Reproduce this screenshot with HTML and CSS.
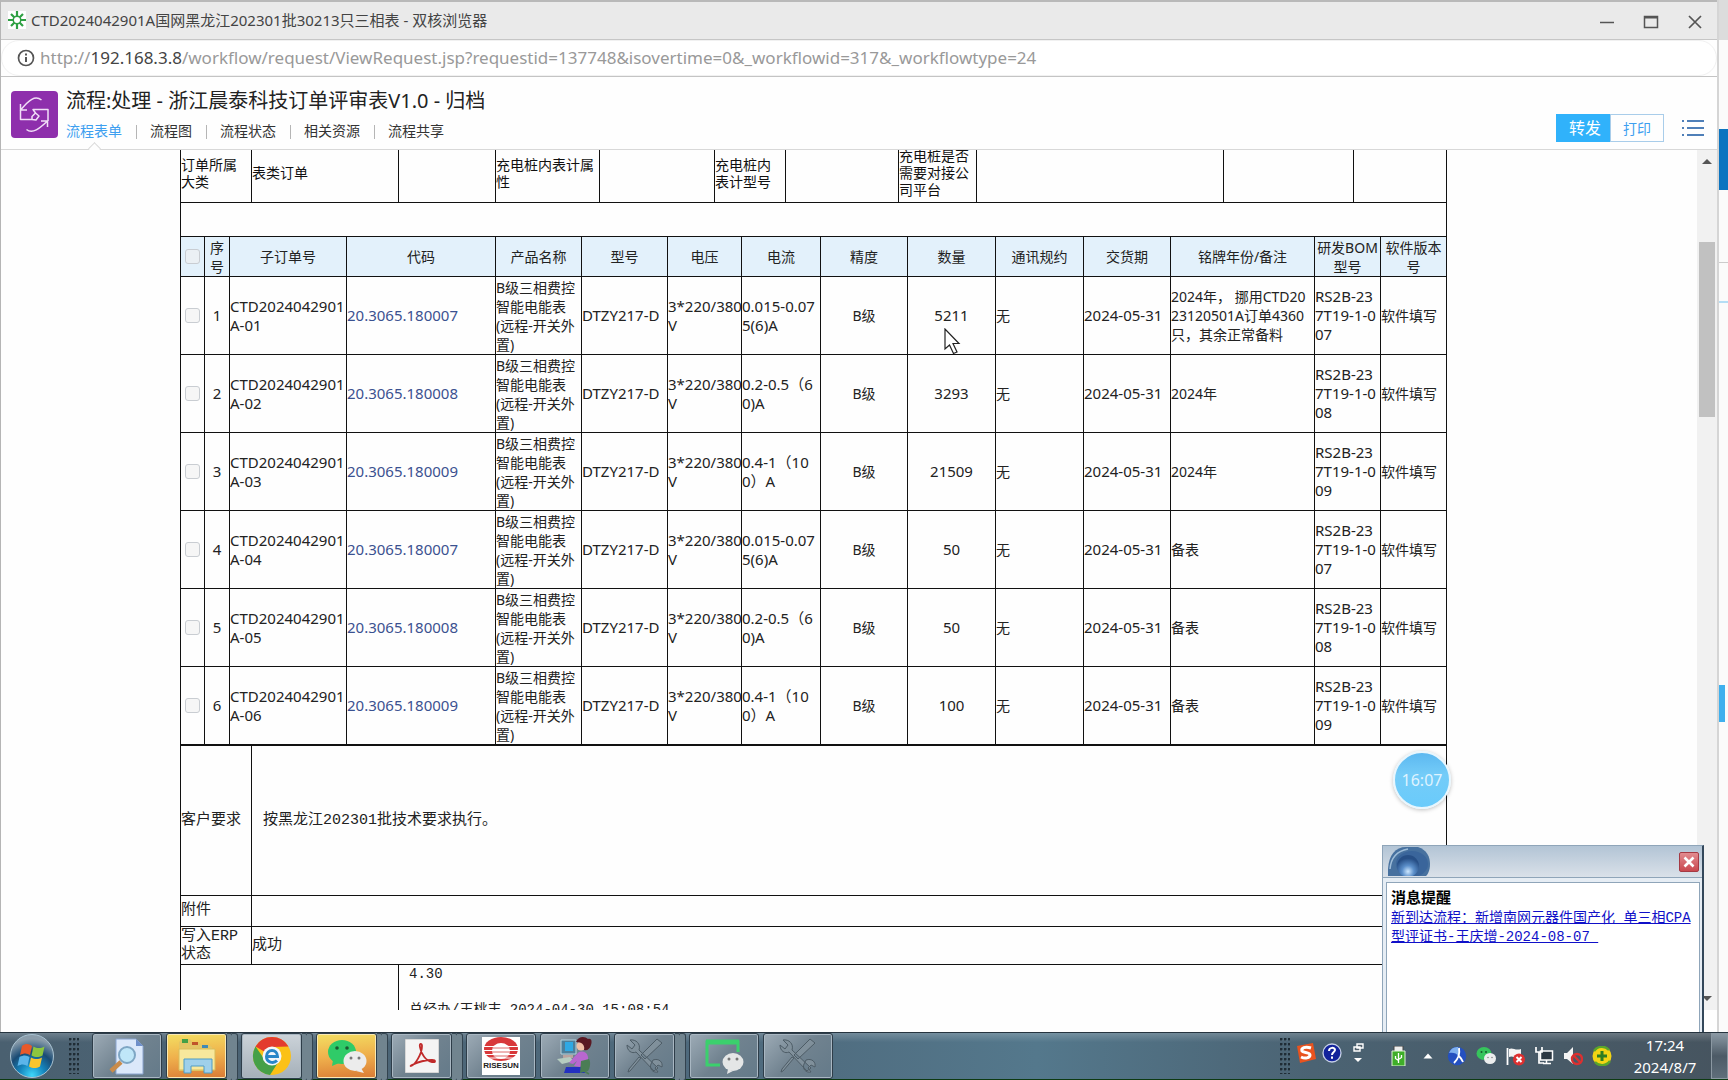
FILE: index.html
```html
<!DOCTYPE html>
<html lang="zh-CN">
<head>
<meta charset="utf-8">
<title>CTD2024042901A国网黑龙江202301批30213只三相表</title>
<link rel="stylesheet" href="styles.css">
</head>
<body>
<div class="stage">
  <section class="browser">
    <header class="titlebar">
      <svg class="favicon" width="18" height="18" viewBox="0 0 18 18"><rect width="18" height="18" fill="#fff"/><g stroke="#2ea043" stroke-width="2.200"><path d="M9 0v18M0 9h18M3 3l12 12M15 3L3 15"/></g><circle cx="9" cy="9" r="4.500" fill="#2ea043"/><circle cx="9" cy="9" r="3" fill="#fff"/></svg>
      <h1 class="window-title">CTD2024042901A国网黑龙江202301批30213只三相表 - 双核浏览器</h1>
      <div class="window-controls">
        <button type="button" aria-label="最小化"><svg width="16" height="16" viewBox="0 0 16 16"><path d="M1 8.500h14" stroke="#555" stroke-width="1.500"/></svg></button>
        <button type="button" aria-label="最大化"><svg width="16" height="16" viewBox="0 0 16 16"><path d="M1.500 2.500h13v11h-13z" fill="none" stroke="#555" stroke-width="1.500"/><path d="M1 3.500h14" stroke="#555" stroke-width="2"/></svg></button>
        <button type="button" aria-label="关闭"><svg width="16" height="16" viewBox="0 0 16 16"><path d="M2 2l12 12M14 2L2 14" stroke="#555" stroke-width="1.700"/></svg></button>
      </div>
    </header>
    <div class="addressbar">
      <div class="address-pill">
        <svg width="18" height="18" viewBox="0 0 18 18"><circle cx="9" cy="9" r="7.500" fill="none" stroke="#555" stroke-width="1.700"/><path d="M9 8v5M9 4.600v2" stroke="#555" stroke-width="2"/></svg>
        <span class="url">http://<span class="host">192.168.3.8</span>/workflow/request/ViewRequest.jsp?requestid=137748&amp;isovertime=0&amp;_workflowid=317&amp;_workflowtype=24</span>
      </div>
    </div>
    <div class="flow-head">
      <svg class="flow-icon" width="47" height="47" viewBox="0 0 47 47"><rect width="47" height="47" rx="4" fill="#8e2fac"/><g fill="none" stroke="#f1dff7" stroke-width="1.500" stroke-linejoin="round"><path d="M30.500 9C24 4 18 9 10 18.500M9.500 13v6h6.500"/><path d="M9.500 19v9.500H21v-3l3.500-3.500-2.500-3.500h15V30M21 28.500l4 .500 3-4-3.500-3"/><path d="M15.500 38.500c6 5 13-1 21-8.500M30 30h6.500v6"/></g></svg>
      <div class="flow-info">
        <h2>流程:处理 - 浙江晨泰科技订单评审表V1.0 - 归档</h2>
        <nav class="tabs">
          <a class="active" href="#form">流程表单</a><a href="#chart">流程图</a><a href="#state">流程状态</a><a href="#related">相关资源</a><a href="#share">流程共享</a>
        </nav>
      </div>
      <div class="flow-actions">
        <button type="button" class="forward">转发</button><button type="button" class="print">打印</button>
        <button type="button" class="menu" aria-label="菜单"><svg width="22" height="18" viewBox="0 0 22 18"><g stroke="#4f7fb8" stroke-width="2"><path d="M5 2h17M5 9h17M5 16h17M0 2h2M0 9h2M0 16h2"/></g></svg></button>
      </div>
    </div>
    <div class="viewport">
      <main class="sheet" id="form">
        <table class="form-table top-form">
          <colgroup><col class="w71"><col class="w147"><col class="w97"><col class="w104"><col class="w115"><col class="w71"><col class="w113"><col class="w78"><col class="w247"><col class="w130"><col class="w93"></colgroup>
          <tr><td>订单所属<br>大类</td><td>表类订单</td><td></td><td>充电桩内表计属<br>性</td><td></td><td>充电桩内<br>表计型号</td><td></td><td>充电桩是否<br>需要对接公<br>司平台</td><td></td><td></td><td></td></tr>
        </table>
        <div class="spacer"></div>
        <table class="form-table detail">
          <colgroup><col class="w24"><col class="w25"><col class="w117"><col class="w149"><col class="w86"><col class="w86"><col class="w74"><col class="w79"><col class="w87"><col class="w88"><col class="w88"><col class="w87"><col class="w144"><col class="w66"><col class="w66"></colgroup>
          <thead><tr><th><input type="checkbox" disabled aria-label="全选"></th><th>序号</th><th>子订单号</th><th>代码</th><th>产品名称</th><th>型号</th><th>电压</th><th>电流</th><th>精度</th><th>数量</th><th>通讯规约</th><th>交货期</th><th>铭牌年份/备注</th><th>研发BOM型号</th><th>软件版本号</th></tr></thead>
          <tbody>
          <tr><td class="mid"><input type="checkbox" disabled aria-label="第1行"></td><td class="mid lat">1</td><td class="lat">CTD2024042901<br>A-01</td><td class="lat"><a href="#c1">20.3065.180007</a></td><td>B级三相费控<br>智能电能表<br>(远程-开关外<br>置)</td><td class="lat">DTZY217-D</td><td class="lat">3*220/380<br>V</td><td class="lat">0.015-0.07<br>5(6)A</td><td class="mid">B级</td><td class="mid lat">5211</td><td>无</td><td class="lat">2024-05-31</td><td>2024年， 挪用CTD20<br>23120501A订单4360<br>只，其余正常备料</td><td class="lat">RS2B-23<br>7T19-1-0<br>07</td><td>软件填写</td></tr>
          <tr><td class="mid"><input type="checkbox" disabled aria-label="第2行"></td><td class="mid lat">2</td><td class="lat">CTD2024042901<br>A-02</td><td class="lat"><a href="#c2">20.3065.180008</a></td><td>B级三相费控<br>智能电能表<br>(远程-开关外<br>置)</td><td class="lat">DTZY217-D</td><td class="lat">3*220/380<br>V</td><td class="lat">0.2-0.5（6<br>0)A</td><td class="mid">B级</td><td class="mid lat">3293</td><td>无</td><td class="lat">2024-05-31</td><td>2024年</td><td class="lat">RS2B-23<br>7T19-1-0<br>08</td><td>软件填写</td></tr>
          <tr><td class="mid"><input type="checkbox" disabled aria-label="第3行"></td><td class="mid lat">3</td><td class="lat">CTD2024042901<br>A-03</td><td class="lat"><a href="#c3">20.3065.180009</a></td><td>B级三相费控<br>智能电能表<br>(远程-开关外<br>置)</td><td class="lat">DTZY217-D</td><td class="lat">3*220/380<br>V</td><td class="lat">0.4-1（10<br>0）A</td><td class="mid">B级</td><td class="mid lat">21509</td><td>无</td><td class="lat">2024-05-31</td><td>2024年</td><td class="lat">RS2B-23<br>7T19-1-0<br>09</td><td>软件填写</td></tr>
          <tr><td class="mid"><input type="checkbox" disabled aria-label="第4行"></td><td class="mid lat">4</td><td class="lat">CTD2024042901<br>A-04</td><td class="lat"><a href="#c4">20.3065.180007</a></td><td>B级三相费控<br>智能电能表<br>(远程-开关外<br>置)</td><td class="lat">DTZY217-D</td><td class="lat">3*220/380<br>V</td><td class="lat">0.015-0.07<br>5(6)A</td><td class="mid">B级</td><td class="mid lat">50</td><td>无</td><td class="lat">2024-05-31</td><td>备表</td><td class="lat">RS2B-23<br>7T19-1-0<br>07</td><td>软件填写</td></tr>
          <tr><td class="mid"><input type="checkbox" disabled aria-label="第5行"></td><td class="mid lat">5</td><td class="lat">CTD2024042901<br>A-05</td><td class="lat"><a href="#c5">20.3065.180008</a></td><td>B级三相费控<br>智能电能表<br>(远程-开关外<br>置)</td><td class="lat">DTZY217-D</td><td class="lat">3*220/380<br>V</td><td class="lat">0.2-0.5（6<br>0)A</td><td class="mid">B级</td><td class="mid lat">50</td><td>无</td><td class="lat">2024-05-31</td><td>备表</td><td class="lat">RS2B-23<br>7T19-1-0<br>08</td><td>软件填写</td></tr>
          <tr><td class="mid"><input type="checkbox" disabled aria-label="第6行"></td><td class="mid lat">6</td><td class="lat">CTD2024042901<br>A-06</td><td class="lat"><a href="#c6">20.3065.180009</a></td><td>B级三相费控<br>智能电能表<br>(远程-开关外<br>置)</td><td class="lat">DTZY217-D</td><td class="lat">3*220/380<br>V</td><td class="lat">0.4-1（10<br>0）A</td><td class="mid">B级</td><td class="mid lat">100</td><td>无</td><td class="lat">2024-05-31</td><td>备表</td><td class="lat">RS2B-23<br>7T19-1-0<br>09</td><td>软件填写</td></tr>
          </tbody>
        </table>
        <table class="form-table lower">
          <colgroup><col class="w71"><col class="w147"><col></colgroup>
          <tr class="request"><td>客户要求</td><td colspan="2" class="indent">按黑龙江202301批技术要求执行。</td></tr>
          <tr class="attach"><td>附件</td><td colspan="2"></td></tr>
          <tr class="erp"><td>写入ERP<br>状态</td><td colspan="2">成功</td></tr>
          <tr class="opinion"><td colspan="2"></td><td><p>4.30</p><p>总经办/王桃丰 2024-04-30 15:08:54</p></td></tr>
        </table>
      </main>
      <div class="scrollbar"><span class="arrow up"></span><span class="thumb"></span><span class="arrow down"></span></div>
    </div>
  </section>
  <aside class="behind"><i class="b-top"></i><i class="b-blue"></i><i class="b-line"></i><i class="b-dash"></i><i class="b-tab"></i></aside>

  <svg class="cursor" width="17" height="27" viewBox="0 0 17 27"><path d="M1 1v20l4.500-4 4 8.500 3.500-1.500-4-8.500h6z" fill="#fff" stroke="#222" stroke-width="1.200"/></svg>
  <div class="timer">16:07</div>
  <section class="popup">
    <div class="popup-bar">
      <svg width="42" height="29" viewBox="0 0 42 29"><defs><radialGradient id="lens" cx=".5" cy=".75" r=".6"><stop offset="0" stop-color="#cfe8ff"/><stop offset=".45" stop-color="#5b8fca"/><stop offset="1" stop-color="#274f86"/></radialGradient></defs><path d="M0 29C-1 10 6 0 18 0h12c9 3 12 10 12 17 0 6-2 10-4 12z" fill="#47719f"/><path d="M2 22C3 10 9 4 20 2" fill="none" stroke="#9dbcd8" stroke-width="1.500"/><ellipse cx="24" cy="17" rx="16" ry="13" fill="#3a659b"/><circle cx="20" cy="19" r="11" fill="url(#lens)"/></svg>
      <button type="button" aria-label="关闭"><svg width="12" height="12" viewBox="0 0 12 12"><path d="M1.500 1.500l9 9M10.500 1.500l-9 9" stroke="#fff" stroke-width="2.600"/></svg></button>
    </div>
    <div class="popup-body">
      <strong>消息提醒</strong>
      <a href="#msg">新到达流程：新增南网元器件国产化 单三相CPA<br>型评证书-王庆增-2024-08-07&nbsp;</a>
    </div>
  </section>
</div>

<footer class="taskbar">
  <button type="button" class="start" aria-label="开始"><svg width="46" height="46" viewBox="0 0 46 46"><defs><radialGradient id="orb" cx=".5" cy=".95" r=".85"><stop offset="0" stop-color="#3fd8fb"/><stop offset=".35" stop-color="#1585bd"/><stop offset=".65" stop-color="#1a4b74"/><stop offset="1" stop-color="#8b9dab"/></radialGradient></defs><circle cx="23" cy="23" r="21.500" fill="url(#orb)" stroke="#a9c3d2"/><path d="M13 13c4-3 7-2 10 0l-2 9c-3-2-6-2-10 0z" fill="#e8592a"/><path d="M24.500 13.500c4 2 7 2 11 0l-2 9c-4 2-7 2-11 0z" fill="#8cc63f"/><path d="M10.500 24c4-2 7-2 10 0l-2 9c-3-2-6-2-10 0z" fill="#5bb5ea"/><path d="M22 24.500c4 2 7 2 11 0l-2 9c-4 2-7 2-11 0z" fill="#fbc52d"/></svg></button>
  <span class="grip"></span>
  <div class="tasks">
    <button type="button" class="task" aria-label="搜索"><svg width="36" height="38" viewBox="0 0 36 38"><path d="M7 2h20l7 7v28H7z" fill="#dbe8fa" stroke="#8aa4cf"/><path d="M27 2v7h7" fill="#6f8fc9"/><path d="M12 25L2 34" stroke="#c98b4a" stroke-width="4.500"/><circle cx="18" cy="18" r="8" fill="#bfe6f8" stroke="#7ea6c4" stroke-width="2"/></svg></button>
    <button type="button" class="task stack hot" aria-label="资源管理器"><svg width="40" height="38" viewBox="0 0 40 38"><path d="M2 5l3-3h8l2 3h7l2 3h8l3 2v24H2z" fill="#e3c665"/><path d="M5 2h6v4H5z" fill="#43a047"/><path d="M15 5h6v3h-6z" fill="#c0552a"/><path d="M25 8h6v3h-6z" fill="#4189b5"/><path d="M2 12h36v21H2z" fill="#f8e89c" stroke="#d8bd5c"/><path d="M7 36V22h28v14h-8v-7H14v7z" fill="#9fd0ea" stroke="#4f9cc5"/></svg></button>
    <button type="button" class="task stack light" aria-label="浏览器"><svg width="40" height="40" viewBox="0 0 40 40"><circle cx="20" cy="20" r="19" fill="#fbc116"/><path d="M20 20L3.500 10.500A19 19 0 0 1 36.500 10.500L20 11z" fill="#e33b2e"/><path d="M3.500 10.500A19 19 0 0 0 18 39l9-14-12 2z" fill="#45a047"/><circle cx="20" cy="20" r="9.500" fill="#f3f7fa"/><path d="M14 20.500h11.500c0-8-11-8-11 0 0 6 7 7.500 10.500 4" fill="none" stroke="#2987c8" stroke-width="3"/></svg></button>
    <button type="button" class="task stack hot" aria-label="微信"><svg width="40" height="36" viewBox="0 0 40 36"><ellipse cx="15" cy="14" rx="14" ry="12" fill="#2fcb68"/><path d="M6 22l-1 6 7-3z" fill="#2fcb68"/><circle cx="10" cy="10" r="1.800" fill="#1c5a32"/><circle cx="20" cy="10" r="1.800" fill="#1c5a32"/><ellipse cx="28" cy="23" rx="11.500" ry="10" fill="#ececec"/><path d="M34 30l3 5-8-2z" fill="#ececec"/><circle cx="24" cy="20" r="1.500" fill="#777"/><circle cx="32" cy="20" r="1.500" fill="#777"/></svg></button>
    <button type="button" class="task stack" aria-label="PDF"><svg width="34" height="34" viewBox="0 0 34 34"><path d="M0 0h34v34H0z" fill="#f4f4f4" stroke="#b9b9b9"/><path d="M6 27c4-1 11-12 11-20 0-3-3-3-2 1 1 7 6 14 12 15 4 1 4-2 0-2-8 0-14 2-20 5-1 1-2 1-1 1z" fill="none" stroke="#c02a2a" stroke-width="1.800"/></svg></button>
    <button type="button" class="task" aria-label="RISESUN"><svg width="38" height="38" viewBox="0 0 38 38"><path d="M0 0h38v38H0z" fill="#fff"/><ellipse cx="19" cy="12" rx="17" ry="12" fill="#d8383a"/><ellipse cx="19" cy="14" rx="9" ry="8" fill="#fff"/><path d="M2 9.500h34M1 13.500h36M2 17.500h34M5 21h28" stroke="#fff" stroke-width="1"/><path d="M10 11h18M10 15h18M11 19h16" stroke="#dc6a6a" stroke-width="1"/><text x="19" y="31" font-family="Liberation Sans" font-weight="bold" font-size="8" text-anchor="middle" fill="#222">RISESUN</text></svg></button>
    <button type="button" class="task" aria-label="远程协助"><svg width="38" height="38" viewBox="0 0 38 38"><path d="M5 3h15v14H5z" fill="#4d7f9a" stroke="#b4d3de"/><path d="M9 5h8v9H9z" fill="#2fa9e4"/><path d="M7 18h10v3H7z" fill="#b9a4a0"/><path d="M1 22l13-2 4 4-12 3z" fill="#b6ccc0"/><circle cx="25" cy="9" r="4.500" fill="#f0bfa6"/><path d="M20 5c2-6 9-6 12-3 4-1 4 3 3 6-1 4-4 6-7 5 1-4-1-8-8-8z" fill="#5a1822"/><path d="M23 15c6-2 10 2 9 9l-8 6-6-1 3-5-4 3-4-1 5-6z" fill="#b867d0"/><path d="M8 36l2-6h18l1 6z" fill="#2330c0"/><path d="M25 24l8-2c2 3 1 9-1 12l-8 2z" fill="#4b7d55"/><path d="M28 34l5 3" stroke="#4b7d55" stroke-width="1.500"/></svg></button>
    <button type="button" class="task stack" aria-label="工具"><svg class="tools" width="38" height="38" viewBox="0 0 38 38"><path d="M4 3l5 5-3 4-5-4c0 6 5 9 9 7l18 19 4-3-19-18c2-6-3-11-9-10zM31 2l5 4-17 16-4-4zM15 21L4 34l-2 1 1-3 10-12zM27 23c6-2 10 2 9 7l-4-2-3 3 3 4c-5 1-9-3-7-8z"/></svg></button>
    <button type="button" class="task" aria-label="微信窗口"><svg width="40" height="36" viewBox="0 0 40 36"><path d="M34 14V4H3v23h13" fill="none" stroke="#3bd06d" stroke-width="3"/><path d="M2 4h33" stroke="#3bd06d" stroke-width="5"/><ellipse cx="29" cy="24" rx="10.500" ry="9" fill="#e4e6e6"/><path d="M24 31l-1 5 6-3z" fill="#e4e6e6"/><circle cx="25" cy="21" r="1.500" fill="#777"/><circle cx="33" cy="21" r="1.500" fill="#777"/></svg></button>
    <button type="button" class="task" aria-label="工具"><svg class="tools" width="38" height="38" viewBox="0 0 38 38"><path d="M4 3l5 5-3 4-5-4c0 6 5 9 9 7l18 19 4-3-19-18c2-6-3-11-9-10zM31 2l5 4-17 16-4-4zM15 21L4 34l-2 1 1-3 10-12zM27 23c6-2 10 2 9 7l-4-2-3 3 3 4c-5 1-9-3-7-8z"/></svg></button>
  </div>
  <div class="ime">
    <span class="grip"></span>
    <svg width="20" height="20" viewBox="0 0 20 20"><path d="M1 3l16-3 3 16-16 4z" fill="#e8531f"/><path d="M15 5C9 3 5 5 6 8c1 2 8 1 8 4s-5 4-9 2" fill="none" stroke="#fff" stroke-width="3"/></svg>
    <svg width="20" height="20" viewBox="0 0 20 20"><circle cx="10" cy="10" r="9" fill="#12239b" stroke="#c5cfe6" stroke-width="1.300"/><path d="M7 8c0-4 6-4 6-1 0 2-3 2-3 5M10 13.500v2.200" fill="none" stroke="#fff" stroke-width="2"/></svg>
    <svg width="20" height="24" viewBox="0 0 20 24"><path d="M9 3h6v4H9zM6 6h6v4H6z" fill="#52616d" stroke="#fff" stroke-width="1.400"/><path d="M6 17h8l-4 4z" fill="#fff"/></svg>
  </div>
  <div class="tray">
    <svg width="20" height="20" viewBox="0 0 20 20"><path d="M5 0h9v6H5z" fill="#eee" stroke="#444"/><path d="M3 5h13v15H3z" fill="#3fae29" stroke="#dff0d8"/><path d="M9.500 7v10M6.500 10v2.500l3 2M12.500 9v2.500l-3 2" fill="none" stroke="#fff" stroke-width="1.300"/></svg>
    <svg width="20" height="20" viewBox="0 0 20 20"><path d="M5.500 12.500L10 7.500l4.500 5z" fill="#fff"/></svg>
    <svg width="20" height="20" viewBox="0 0 20 20"><circle cx="10" cy="10" r="9.200" fill="#2450c0"/><path d="M2 7a9 9 0 0 1 9-6c2 3 2 6 1 9C9 7 6 6 2 7z" fill="#7fb0ee"/><path d="M12 2c1 5 0 10-5 15M11 9c2 2 4 4 5 7" fill="none" stroke="#fff" stroke-width="1.800"/></svg>
    <svg width="20" height="20" viewBox="0 0 20 20"><ellipse cx="8" cy="7.500" rx="7.500" ry="6.500" fill="#36c45c"/><circle cx="5.500" cy="6" r="1" fill="#165c2a"/><circle cx="10" cy="6" r="1" fill="#165c2a"/><ellipse cx="14" cy="12.500" rx="6" ry="5.500" fill="#eceeee"/><circle cx="12" cy="11.500" r=".8" fill="#888"/><circle cx="16" cy="11.500" r=".8" fill="#888"/></svg>
    <svg width="20" height="20" viewBox="0 0 20 20"><path d="M2.500 2v17" stroke="#fff" stroke-width="1.800"/><path d="M4 3c4-2 6 2 12 0v8c-6 2-8-2-12 0z" fill="#f4f4f4"/><circle cx="14" cy="13.500" r="6" fill="#dd3030"/><path d="M11.500 11l5 5M16.500 11l-5 5" stroke="#fff" stroke-width="2"/></svg>
    <svg width="20" height="20" viewBox="0 0 20 20"><path d="M6.500 5h12v9h-12zM9 17.500h8M12.500 14v3" fill="#2d3943" stroke="#fff" stroke-width="1.500"/><path d="M2 1v5h6V1M5 6v11h5" fill="none" stroke="#fff" stroke-width="1.700"/></svg>
    <svg width="20" height="20" viewBox="0 0 20 20"><path d="M1 7h3l6-6v17l-6-5H1z" fill="#f4f4f4"/><circle cx="14" cy="13" r="5" fill="none" stroke="#dd3030" stroke-width="2.400"/><path d="M10.500 9.500l7 7" stroke="#dd3030" stroke-width="2.400"/></svg>
    <svg width="20" height="20" viewBox="0 0 20 20"><circle cx="10" cy="10" r="9.500" fill="#f3d414"/><path d="M2 5a9.500 9.500 0 0 1 15-1M18 15a9.500 9.500 0 0 1-15 1" fill="none" stroke="#5aa52b" stroke-width="2.400"/><path d="M10 5v10M5 10h10" stroke="#2f7d22" stroke-width="3"/></svg>
  </div>
  <div class="clock"><span>17:24</span><span>2024/8/7</span></div>
  <button type="button" class="show-desktop" aria-label="显示桌面"></button>
</footer>
</body>
</html>
```
FILE: styles.css
```css
* { box-sizing: border-box; }
body {
  margin: 0;
  height: 100vh;
  display: flex;
  flex-direction: column;
  overflow: hidden;
  background: #fff;
  color: #333;
  font: 14px/19px "Noto Sans", "Noto Sans CJK SC", sans-serif;
}
button { margin: 0; padding: 0; border: 0; background: none; font: inherit; color: inherit; }
h1, h2, p { margin: 0; font-weight: 400; }
svg { display: block; flex: none; }
a { text-decoration: none; color: inherit; }

.stage { flex: 1; min-height: 0; display: flex; position: relative; }
.browser {
  flex: 1;
  min-width: 0;
  display: flex;
  flex-direction: column;
  border-top: 2px solid #b9b9b9;
  border-left: 1px solid #b5b5b5;
  background: #fefefe;
}
.titlebar {
  flex: none;
  height: 38px;
  display: flex;
  align-items: center;
  gap: 5px;
  padding: 0 14px 2px 7px;
  background: #eaeaea;
  border-bottom: 1px solid #c6c6c6;
}
.window-title { flex: 1; font-size: 15px; line-height: 20px; color: #444; }
.window-controls { display: flex; gap: 28px; padding-top: 5px; }

.addressbar { flex: none; height: 37px; border-bottom: 1px solid #c4c4c4; }
.address-pill {
  height: 36px;
  display: flex;
  align-items: center;
  gap: 5px;
  padding: 0 15px;
  border: 1px solid #f1f1f1;
  border-radius: 18px;
  background: #fff;
}
.url { font-size: 17px; line-height: 24px; color: #999; white-space: nowrap; }
.host { color: #444; }

.flow-head {
  flex: none;
  height: 73px;
  display: flex;
  align-items: flex-start;
  padding: 10px 13px 0 10px;
  border-bottom: 1px solid #d8d8d8;
}
.flow-icon { margin-top: 4px; }
.flow-info { flex: 1; padding-left: 8px; }
.flow-info h2 { font-size: 20px; line-height: 28px; color: #222; }
.tabs { display: flex; padding-top: 6px; }
.tabs a { position: relative; line-height: 20px; }
.tabs a + a { margin-left: 14px; padding-left: 14px; }
.tabs a + a::before {
  content: "";
  position: absolute;
  left: 0;
  top: 4px;
  height: 14px;
  border-left: 1px solid #b5b5b5;
}
.tabs .active { color: #3d9ff0; }
.tabs .active::after {
  content: "";
  position: absolute;
  left: 50%;
  bottom: -12px;
  width: 8px;
  height: 8px;
  margin-left: -4px;
  border: solid #d8d8d8;
  border-width: 1px 0 0 1px;
  background: #fefefe;
  transform: rotate(45deg);
}
.flow-actions { display: flex; align-items: center; padding-top: 27px; }
.forward, .print { width: 54px; height: 28px; border: 1px solid #a9cdea; }
.forward { background: #30b2fb; border-color: #30b2fb; color: #fff; font-size: 16px; padding-left: 4px; }
.print { color: #3d9ff0; }
.menu { margin-left: 18px; }

.viewport { flex: 1; min-height: 0; display: flex; margin-bottom: 22px; overflow: hidden; }
.sheet { flex: 1; min-width: 0; padding: 0 250px 0 179px; color: #222; }
.form-table { width: 100%; table-layout: fixed; border-collapse: collapse; }
.form-table td, .form-table th { padding: 0; border: 1px solid #111; text-align: left; font-weight: 400; vertical-align: middle; }
.w24 { width: 24px; } .w25 { width: 25px; } .w66 { width: 66px; } .w71 { width: 71px; }
.w74 { width: 74px; } .w78 { width: 78px; } .w79 { width: 79px; } .w86 { width: 86px; }
.w87 { width: 87px; } .w88 { width: 88px; } .w93 { width: 93px; } .w97 { width: 97px; }
.w104 { width: 104px; } .w113 { width: 113px; } .w115 { width: 115px; } .w117 { width: 117px; }
.w130 { width: 130px; } .w144 { width: 144px; } .w147 { width: 147px; } .w149 { width: 149px; }
.w247 { width: 247px; }

.top-form { margin-top: -8px; line-height: 17px; color: #111; }
.top-form tr { height: 60px; }
.spacer { height: 33px; border: solid #111; border-width: 0 1px; }
.detail thead tr { height: 40px; background: #e3f1fb; }
.detail tbody tr { height: 78px; }
.form-table.detail th, .form-table.detail .mid { text-align: center; }
.detail .lat { font-size: 15px; white-space: nowrap; }
.detail td { white-space: nowrap; }
.detail a { color: #3b5190; }
.detail input {
  appearance: none;
  display: block;
  width: 15px;
  height: 15px;
  margin: 0 auto;
  border: 1px solid #c9cdd2;
  border-radius: 3px;
  background: rgba(240, 240, 240, .6);
}
.lower { font: 15px/18px "Liberation Mono", "Noto Sans CJK SC", monospace; }
.request { height: 150px; }
.attach { height: 31px; }
.erp { height: 38px; }
.form-table .indent { padding-left: 11px; }
.form-table .opinion td { height: 70px; padding: 0 0 0 10px; vertical-align: top; font-size: 14px; }
.opinion p { line-height: 18px; }
.opinion p + p { margin-top: 18px; }

.scrollbar { width: 20px; display: flex; flex-direction: column; align-items: center; background: #f1f1f1; }
.arrow { margin: 9px 0; border: 5px solid transparent; border-top-width: 0; border-bottom: 5px solid #555; }
.arrow.down { margin-top: auto; border-top: 5px solid #555; border-bottom-width: 0; }
.thumb { width: 16px; height: 175px; margin-top: 69px; background: #c1c1c1; }

.behind { flex: none; width: 11px; display: flex; flex-direction: column; background: #fbfbfb; border-left: 2px solid #d5d5d5; }
.behind i { flex: none; }
.b-top { height: 40px; background: #dcdcdc; }
.b-blue { height: 61px; margin-top: 89px; background: #0b74c0; }
.b-line { height: 1px; margin-top: 72px; background: #ccc; }
.b-dash { height: 2px; margin-top: 38px; background: #b5def5; }
.b-tab { width: 6px; height: 37px; margin-top: 382px; background: #3fb0ee; }

.cursor { position: absolute; left: 944px; top: 328px; }
.timer {
  position: absolute;
  right: 277px;
  bottom: 223px;
  width: 58px;
  height: 58px;
  border: 2px solid #e9f6fd;
  border-radius: 50%;
  background: linear-gradient(#5cb8f0, #74ccf8 40%, #6acbfb);
  box-shadow: 0 1px 4px rgba(0, 0, 0, .25);
  color: #dff3ff;
  font-size: 16px;
  line-height: 54px;
  text-align: center;
}
.popup {
  position: absolute;
  right: 24px;
  bottom: 0;
  width: 322px;
  height: 187px;
  display: flex;
  flex-direction: column;
  border: 1px solid #8fa5b9;
  border-right: 2px solid #33475a;
  border-bottom: 0;
  background: #e6edf4;
}
.popup-bar {
  flex: none;
  height: 32px;
  display: flex;
  align-items: center;
  justify-content: space-between;
  padding: 0 3px 0 5px;
  border-bottom: 1px solid #8fa5b9;
  background: linear-gradient(#b2c4d5, #dae1e9);
}
.popup-bar button {
  width: 20px;
  height: 20px;
  display: flex;
  align-items: center;
  justify-content: center;
  border: 1px solid #a53a44;
  border-radius: 2px;
  background: linear-gradient(#e28b8f, #c9484f);
}
.popup-body {
  flex: 1;
  margin: 4px 2px 0 3px;
  padding: 7px 4px;
  border: 1px solid #8fa5b9;
  border-bottom: 0;
  background: #fff;
  font: 14px/19px "Liberation Mono", "Noto Sans CJK SC", monospace;
  white-space: nowrap;
}
.popup-body strong { display: block; font-size: 15px; color: #000; }
.popup-body a { display: block; text-decoration: underline; color: #1010c8; }

.taskbar {
  flex: none;
  height: 48px;
  display: flex;
  align-items: center;
  border-top: 1px solid #26343f;
  border-bottom: 1px solid #0d3a12;
  background: linear-gradient(rgba(255, 255, 255, .2), transparent 20%), linear-gradient(90deg, #4a6070, #4f6b7e 45%, #54788c 60%, #4b6373 76%, #46545f);
}
.start { margin: 0 14px 0 9px; }
.grip {
  flex: none;
  width: 10px;
  height: 36px;
  background: radial-gradient(circle at 1px 1px, #1f2c35 1px, transparent 2px) 0 0 / 4px 5px;
}
.tasks { display: flex; gap: 4px; margin-left: 13px; }
.task {
  position: relative;
  width: 70px;
  height: 46px;
  display: flex;
  align-items: center;
  justify-content: center;
  border: 1px solid #2e3d49;
  border-radius: 3px;
  background: linear-gradient(135deg, #9dabb6, #70828f 50%, #647a89);
  box-shadow: inset 0 0 0 1px #a9b7c2;
}
.task.stack { width: 61px; margin-right: 10px; }
.stack::before, .stack::after {
  content: "";
  position: absolute;
  top: -1px;
  width: 5px;
  height: 46px;
  border: 1px solid #33434f;
  border-left: 0;
  border-radius: 0 3px 3px 0;
  background: #71848f;
}
.stack::before { left: 60px; }
.stack::after { left: 65px; }
.hot { background: linear-gradient(175deg, #f3df62, #efb04c 50%, #d97a35); box-shadow: inset 0 0 0 1px #f9e9b4; }
.light { background: linear-gradient(#ccd3d9, #a5b0b9); }
.tools { fill: #80909b; stroke: #4d5c66; stroke-width: 1; }
.ime { display: flex; align-items: center; gap: 6px; margin-left: auto; margin-right: 21px; }
.ime svg { margin-top: -6px; }
.tray { display: flex; align-items: center; gap: 9px; }
.clock {
  width: 92px;
  margin-left: 7px;
  display: flex;
  flex-direction: column;
  align-items: center;
  color: #fff;
  font-size: 15px;
  line-height: 22px;
}
.show-desktop { width: 17px; height: 46px; border: 1px solid #8b98a2; background: linear-gradient(#8a98a3, #4c5a66 50%, #5f6e7a); }
```
